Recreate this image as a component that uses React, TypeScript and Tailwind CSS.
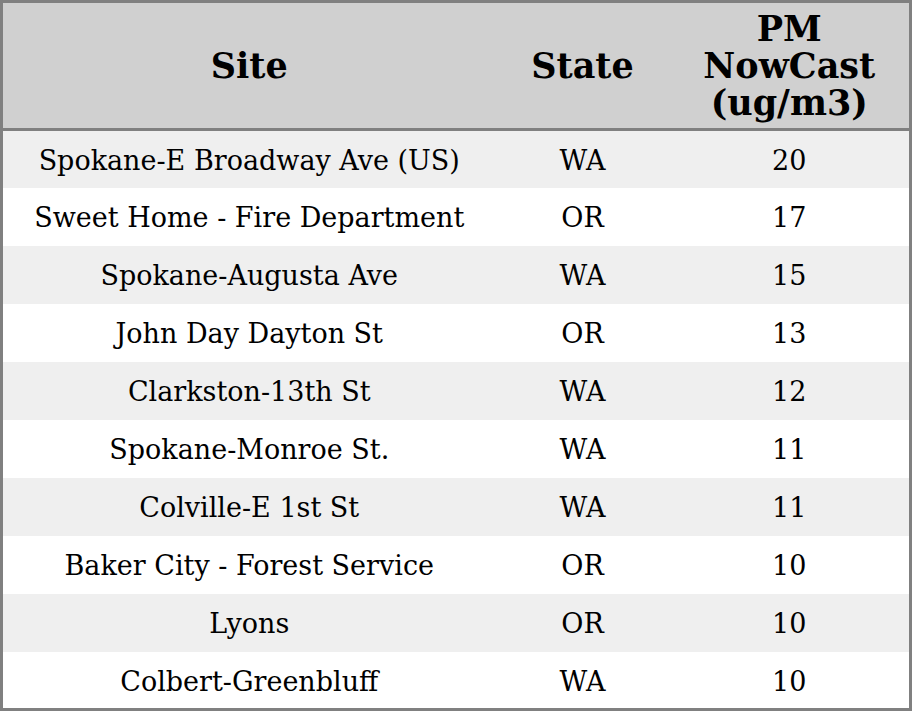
const rows: [string, string, number][] = [
  ["Spokane-E Broadway Ave (US)", "WA", 20],
  ["Sweet Home - Fire Department", "OR", 17],
  ["Spokane-Augusta Ave", "WA", 15],
  ["John Day Dayton St", "OR", 13],
  ["Clarkston-13th St", "WA", 12],
  ["Spokane-Monroe St.", "WA", 11],
  ["Colville-E 1st St", "WA", 11],
  ["Baker City - Forest Service", "OR", 10],
  ["Lyons", "OR", 10],
  ["Colbert-Greenbluff", "WA", 10],
];

export default function App() {
  return (
    <div className="h-[711px] w-[912px] overflow-hidden bg-white font-['DejaVu_Serif',serif] text-black">
      <table className="w-[912px] border-collapse border-[3px] border-[#808080]">
        <thead>
          <tr className="h-[128px] border-b-[3px] border-[#808080] bg-[#d0d0d0] text-[35px] font-bold leading-[37px]">
            <th className="w-[494px] text-center">Site</th>
            <th className="w-[174px] text-center">State</th>
            <th className="text-center">
              PM
              <br />
              NowCast
              <br />
              (ug/m3)
            </th>
          </tr>
        </thead>
        <tbody className="text-[27px]">
          {rows.map(([site, state, pm], i) => (
            <tr
              key={site}
              className={`h-[58px] ${i % 2 === 0 ? "bg-[#efefef]" : "bg-white"}`}
            >
              <td className="pt-[4px] text-center">{site}</td>
              <td className="pt-[4px] text-center">{state}</td>
              <td className="pt-[4px] text-center">{pm}</td>
            </tr>
          ))}
        </tbody>
      </table>
    </div>
  );
}
